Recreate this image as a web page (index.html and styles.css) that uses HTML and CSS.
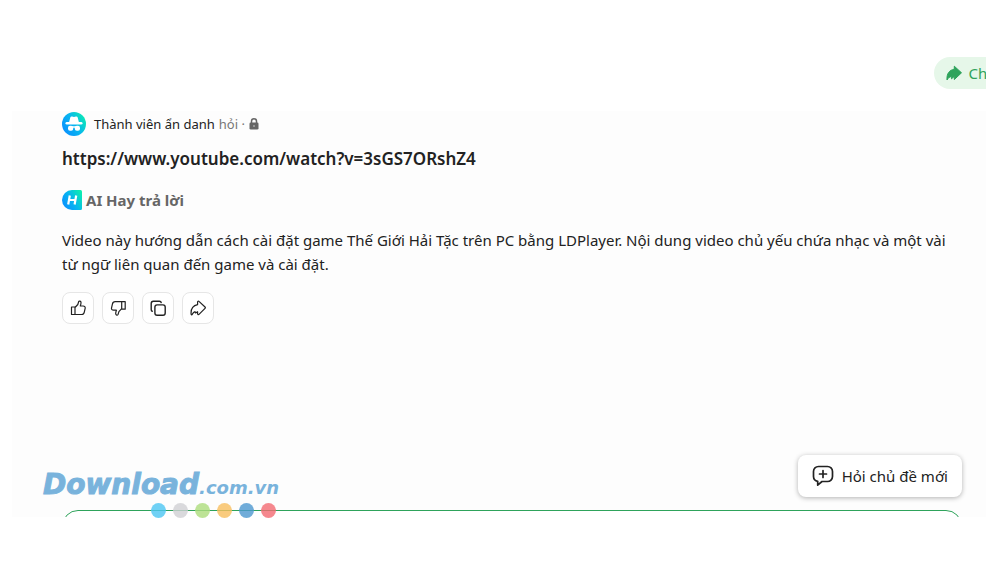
FILE: index.html
```html
<!DOCTYPE html>
<html lang="vi">
<head>
    <meta charset="UTF-8">
    <meta name="viewport" content="width=device-width, initial-scale=1.0">
    <title>AI Hay</title>
    <link rel="stylesheet" href="styles.css">
</head>
<body>
    <div class="page">
        <header class="topbar">
            <button type="button" class="share-button">
                <svg width="16" height="16" viewBox="0 0 16 16"><path d="M8.300 1.200v3C3.500 5 .5 8.500 1 15c1.500-2.300 2.600-3.200 4.200-3.600l.3 2.400 2.800-2.400v3.200l7.200-6.800z" fill="#2ea35b" stroke="#2ea35b" stroke-linejoin="round"/></svg>
                <span>Chia sẻ</span>
            </button>
        </header>

        <main class="thread">
            <div class="asker">
                <svg width="24" height="24" viewBox="0 0 24 24">
                    <defs>
                        <linearGradient id="brand" x1="0" y1=".8" x2="1" y2=".2">
                            <stop offset="0" stop-color="#0a8dff"/>
                            <stop offset=".5" stop-color="#08b5f0"/>
                            <stop offset="1" stop-color="#0bedb0"/>
                        </linearGradient>
                    </defs>
                    <circle cx="12" cy="12" r="12" fill="url(#brand)"/>
                    <path d="M7 10.500L8.300 5.500c.3-1 1-1.200 1.800-.9 1.200.5 2.600.5 3.800 0 .8-.3 1.500-.1 1.800.9L17 10.500z" fill="#fff"/>
                    <rect x="3.500" y="10" width="17" height="2.600" rx="1.300" fill="#fff"/>
                    <rect x="6" y="13.800" width="5.200" height="5" rx="2" fill="#fff"/>
                    <rect x="12.800" y="13.800" width="5.200" height="5" rx="2" fill="#fff"/>
                    <path d="M10 15h4" stroke="#fff" stroke-width="1.500"/>
                </svg>
                <span class="asker-name">Thành viên ẩn danh</span>
                <span class="asker-note">hỏi ·</span>
                <svg width="10" height="12" viewBox="0 0 10 12"><path d="M2.500 5V3.300a2.500 2.500 0 0 1 5 0V5" fill="none" stroke="#666" stroke-width="1.500"/><rect x=".5" y="4.500" width="9" height="7" rx="1.300" fill="#666"/><circle cx="5" cy="8" r="1" fill="#aaa"/></svg>
            </div>

            <h1 class="question">https://www.youtube.com/watch?v=3sGS7ORshZ4</h1>

            <h2 class="answer-title">
                <svg width="20" height="20" viewBox="0 0 20 20"><path d="M10 0h8.500A1.500 1.500 0 0 1 20 1.500v17a1.500 1.500 0 0 1-1.500 1.500H10A10 10 0 0 1 10 0z" fill="url(#brand)"/><path d="M7.800 5.500L6.200 14.500M14.200 5.500l-1.600 9M7 10h6.500" fill="none" stroke="#fff" stroke-width="2.200"/></svg>
                <span>AI Hay trả lời</span>
            </h2>

            <p class="answer">Video này hướng dẫn cách cài đặt game Thế Giới Hải Tặc trên PC bằng LDPlayer. Nội dung video chủ yếu chứa nhạc và một vài từ ngữ liên quan đến game và cài đặt.</p>

            <div class="actions">
                <button type="button" aria-label="Thích">
                    <svg width="16" height="16" viewBox="0 0 16 16"><path d="M1.500 7H5v7.500H1.500zM5 7.500l2.800-3 .8-2.700c.4-1.200 2.300-.8 2.400.6.1 1.300-.3 2.500-.7 3.600h2.900c1.300 0 2.200.9 2 2.100l-.9 4c-.3 1.500-1.300 2.400-2.800 2.400H5z"/></svg>
                </button>
                <button type="button" aria-label="Không thích">
                    <svg width="16" height="16" viewBox="0 0 16 16"><path d="M15.200 9.200h-3.500V1.700h3.500zM11.700 8.700l-2.800 3-.8 2.700c-.4 1.200-2.300.8-2.400-.6-.1-1.300.3-2.500.7-3.600H3.500c-1.300 0-2.200-.9-2-2.100l.9-4c.3-1.500 1.300-2.400 2.800-2.400h6.500z"/></svg>
                </button>
                <button type="button" aria-label="Sao chép">
                    <svg width="16" height="16" viewBox="0 0 16 16"><rect x="4.900" y="4.900" width="10.300" height="10.300" rx="2.200" stroke-width="1.400"/><path d="M2.300 11.200C1.500 11 1.200 10.200 1.200 9.400V3.400C1.200 2 2 1.200 3.400 1.200h6c.9 0 1.600.4 1.800 1.300" stroke-width="1.400"/></svg>
                </button>
                <button type="button" aria-label="Chia sẻ">
                    <svg width="16" height="16" viewBox="0 0 16 16"><path d="M7.600 2v2.600C3.300 5.400.7 8.700 1.100 14.200c.1.700.8.8 1.100.2.800-1.500 1.700-2.400 2.900-2.700.3.600.3 1 .5 1.300.7-.3 1.300-.9 2-1.300v2.100c0 .8.900 1.100 1.400.6l6-6c.4-.4.400-1 0-1.400L9 1.400C8.400.8 7.600 1.200 7.600 2z"/></svg>
                </button>
            </div>

            <div class="new-topic-row">
                <button type="button" class="new-topic">
                    <svg width="22" height="22" viewBox="0 0 22 22"><path d="M6.500 1.500h9a5 5 0 0 1 5 5v5a5 5 0 0 1-5 5H10l-4.300 3.700v-3.900a5 5 0 0 1-4.200-4.800v-5a5 5 0 0 1 5-5zM11 5.500v7M7.500 9h7" fill="none" stroke="#222" stroke-width="1.700" stroke-linejoin="round" stroke-linecap="round"/></svg>
                    <span>Hỏi chủ đề mới</span>
                </button>
            </div>

            <div class="composer">
                <textarea class="composer-input" aria-label="Câu hỏi"></textarea>
            </div>

            <!-- Logo chìm -->
            <div class="watermark">
                <div class="watermark-name">Download<small>.com.vn</small></div>
                <div class="dots">
                    <i class="sky"></i><i class="gray"></i><i class="green"></i><i class="orange"></i><i class="blue"></i><i class="red"></i>
                </div>
            </div>
        </main>
    </div>
</body>
</html>
```
FILE: styles.css
```css
* {
    box-sizing: border-box;
}

body {
    margin: 0;
    background: #fff;
    color: #222;
    font-family: "Noto Sans", "Open Sans", sans-serif;
    font-size: 15px;
    line-height: 24px;
}

button {
    font: inherit;
    color: inherit;
    cursor: pointer;
}

svg {
    display: block;
    flex: none;
}

.page {
    margin: 0 14px 0 12px;
    padding-bottom: 8px;
    overflow: hidden;
}

/* Thanh trên */
.topbar {
    display: flex;
    justify-content: flex-end;
    padding: 57px 0 22px;
}

.share-button {
    display: flex;
    align-items: center;
    gap: 6px;
    flex: none;
    height: 32px;
    margin-right: -45px;
    padding: 0 12px;
    border: 0;
    border-radius: 16px;
    background: #e6f7e9;
    color: #2ea35b;
}

/* Nội dung hỏi đáp */
.thread {
    position: relative;
    padding: 1px 24px 0 50px;
    background: #fdfdfd;
}

.asker {
    display: flex;
    align-items: center;
    gap: 4px;
    font-size: 13px;
    line-height: 22px;
}

.asker-name {
    margin-left: 4px;
}

.asker-note {
    color: #777;
}

.question {
    margin: 11px 0 17px;
    font-size: 17px;
    font-weight: 600;
    line-height: 24px;
}

.answer-title {
    display: flex;
    align-items: center;
    gap: 4px;
    margin: 0 0 16px;
    color: #666;
    font-size: 15px;
    font-weight: 700;
}

.answer {
    margin: 0 0 16px;
}

.actions {
    display: flex;
    gap: 8px;
}

.actions button {
    display: flex;
    align-items: center;
    justify-content: center;
    width: 32px;
    height: 32px;
    padding: 0;
    border: 1px solid #e6e6e6;
    border-radius: 8px;
    background: #fff;
}

.actions svg {
    fill: none;
    stroke: #222;
    stroke-width: 1.2;
    stroke-linejoin: round;
    stroke-linecap: round;
}

.new-topic-row {
    display: flex;
    justify-content: flex-end;
    margin-top: 131px;
}

.new-topic {
    display: flex;
    align-items: center;
    gap: 8px;
    height: 42px;
    padding: 0 14px;
    border: 0;
    border-radius: 8px;
    background: #fff;
    box-shadow: 0 1px 5px rgba(0, 0, 0, 0.3);
}

.composer {
    height: 20px;
    padding-top: 13px;
    overflow: hidden;
}

.composer-input {
    display: block;
    width: 100%;
    height: 56px;
    border: 1px solid #2ea35b;
    border-radius: 16px;
    background: #fff;
    resize: none;
}

/* Logo chìm */
.watermark {
    position: absolute;
    left: 31px;
    bottom: -1px;
    pointer-events: none;
}

.watermark-name {
    color: #79b3dc;
    font-family: "DejaVu Sans", sans-serif;
    font-size: 28px;
    font-style: italic;
    font-weight: 700;
    line-height: 30px;
    -webkit-text-stroke: 1px #79b3dc;
}

.watermark-name small {
    font-size: 18px;
    -webkit-text-stroke: 0;
}

.dots {
    display: flex;
    gap: 7px;
    padding-left: 108px;
}

.dots i {
    width: 15px;
    height: 15px;
    border-radius: 50%;
    opacity: 0.8;
}

.sky { background: #4cc5f3; }
.gray { background: #d0d0d3; }
.green { background: #addc7c; }
.orange { background: #f8be5e; }
.blue { background: #4c97cf; }
.red { background: #f36a72; }
```
